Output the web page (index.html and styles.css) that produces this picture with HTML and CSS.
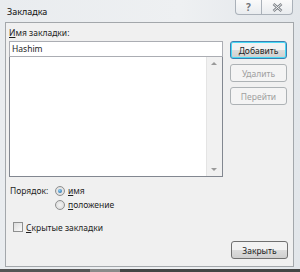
FILE: index.html
```html
<!doctype html>
<html lang="ru">
  <head>
    <meta charset="UTF-8" />
    <title>Закладка</title>
    <link rel="stylesheet" href="styles.css">
  </head>
  <body>
    <div class="window">
      <div class="titlebar">
        <div class="title">Закладка</div>
        <div class="caption-buttons">
          <div class="cap-btn help">?</div>
          <div class="cap-btn close">
            <svg class="x-icon" width="11" height="9" viewBox="0 0 11 9">
              <path d="M1.5 1 L9.5 8 M9.5 1 L1.5 8" stroke="#7a7f85" stroke-width="2.6" fill="none" />
              <path d="M1.5 1 L9.5 8 M9.5 1 L1.5 8" stroke="#f4f4f4" stroke-width="1" fill="none" />
            </svg>
          </div>
        </div>
      </div>

      <div class="client">
        <div class="main">
          <div class="left">
            <div class="label"><u>И</u>мя закладки:</div>
            <div class="textbox">Hashim</div>
            <div class="listbox">
              <div class="list-area"></div>
              <div class="scrollbar">
                <span class="arrow up"></span>
                <span class="arrow down"></span>
              </div>
            </div>
          </div>
          <div class="right">
            <button class="btn default"><u>Д</u>обавить</button>
            <button class="btn" disabled>Удалить</button>
            <button class="btn" disabled>Перейти</button>
          </div>
        </div>

        <div class="order">
          <div class="order-label">Порядок:</div>
          <div class="radios">
            <div class="radio-row"><span class="radio checked"></span><span><u>и</u>мя</span></div>
            <div class="radio-row"><span class="radio"></span><span><u>п</u>оложение</span></div>
          </div>
        </div>

        <div class="check-row"><span class="checkbox"></span><span><u>С</u>крытые закладки</span></div>

        <div class="footer">
          <button class="btn">Закрыть</button>
        </div>
      </div>
    </div>
    <div class="desk"></div>
  </body>
</html>
```

FILE: styles.css
```css
body {
  margin: 0;
  width: 300px;
  height: 272px;
  overflow: hidden;
  background: #dfe4ea;
  font-family: "Noto Sans", "Open Sans", sans-serif;
  font-size: 8.5px;
  color: #1e1e1e;
}

.window {
  height: 269px;
  padding: 0 6px 0 5px;
  background: linear-gradient(90deg, #e9ecef, #eef0f2 60%, #e2e6ea);
  box-sizing: border-box;
}

.titlebar {
  height: 22px;
  display: flex;
  justify-content: space-between;
  align-items: flex-start;
}

.title {
  padding: 6px 0 0 2px;
  font-size: 9px;
  line-height: 12px;
  color: #111;
}

.caption-buttons {
  display: flex;
  margin-right: 1px;
}

.cap-btn {
  height: 15px;
  border: 1px solid #aab1b9;
  border-top: none;
  background: linear-gradient(#fafafa, #e9ecef);
  display: flex;
  justify-content: center;
  align-items: center;
  box-sizing: border-box;
}

.cap-btn.help {
  width: 27px;
  border-radius: 0 0 0 4px;
  font-size: 10px;
  font-weight: bold;
  color: #6f747a;
}

.cap-btn.close {
  width: 31px;
  border-left: none;
  border-radius: 0 0 4px 0;
}

.x-icon {
  display: block;
}

.client {
  height: 245px;
  background: #f0f0f0;
  border: 1px solid #a3a7ab;
  box-sizing: border-box;
  padding: 5px 5px 0 3px;
}

.main {
  display: flex;
  gap: 7px;
}

.left {
  width: 214px;
}

.label {
  height: 10px;
  line-height: 10px;
  margin-bottom: 3px;
}

.textbox {
  height: 16px;
  border: 1px solid #abadb3;
  background: #fff;
  padding-left: 2px;
  line-height: 14px;
  box-sizing: border-box;
}

.listbox {
  height: 120px;
  border: 1px solid #828790;
  border-top: none;
  background: #fff;
  display: flex;
  box-sizing: border-box;
}

.list-area {
  flex: 1;
}

.scrollbar {
  width: 15px;
  background: #f1f1f1;
  border-left: 1px solid #e4e4e4;
  position: relative;
}

.arrow {
  position: absolute;
  left: 4px;
  width: 0;
  height: 0;
  border-left: 3px solid transparent;
  border-right: 3px solid transparent;
}

.arrow.up {
  top: 5px;
  border-bottom: 3px solid #9a9a9a;
}

.arrow.down {
  bottom: 5px;
  border-top: 3px solid #9a9a9a;
}

.right {
  display: flex;
  flex-direction: column;
  gap: 5px;
  padding-top: 13px;
}

.btn {
  width: 57px;
  height: 18px;
  padding: 0;
  border: 1px solid #707070;
  border-radius: 3px;
  background: linear-gradient(#f2f2f2 50%, #dddddd 50%, #cfcfcf);
  font-family: inherit;
  font-size: 8.5px;
  color: #1e1e1e;
}

.btn.default {
  border-color: #3c7fb1;
  box-shadow: inset 0 0 0 1px #48d9f5;
}

.btn:disabled {
  background: #f4f4f4;
  border-color: #adb2b5;
  color: #a0a0a0;
}

.order {
  display: flex;
  margin-top: 7px;
}

.order-label {
  width: 45px;
  padding-left: 1px;
  line-height: 13px;
}

.radios {
  display: flex;
  flex-direction: column;
  gap: 1px;
}

.radio-row {
  display: flex;
  align-items: center;
  gap: 3px;
  height: 13px;
}

.radio {
  width: 10px;
  height: 10px;
  border-radius: 50%;
  border: 1px solid #8e8f8f;
  background: radial-gradient(#f4f4f4, #d6d6d6);
  box-sizing: border-box;
  position: relative;
}

.radio.checked::after {
  content: "";
  position: absolute;
  left: 2px;
  top: 2px;
  width: 4px;
  height: 4px;
  border-radius: 50%;
  background: radial-gradient(circle at 40% 35%, #8ad0f5, #1d5d9c);
}

.check-row {
  display: flex;
  align-items: center;
  gap: 3px;
  height: 12px;
  margin-top: 10px;
  padding-left: 4px;
}

.checkbox {
  width: 10px;
  height: 10px;
  border: 1px solid #8e8f8f;
  background: linear-gradient(135deg, #dcdcdc, #fbfbfb);
  box-sizing: border-box;
}

.footer {
  display: flex;
  justify-content: flex-end;
  margin-top: 8px;
}

.desk {
  height: 3px;
  background: linear-gradient(90deg, #555 0 30%, #8a8a8a 30% 40%, #444 40% 100%);
}
```
